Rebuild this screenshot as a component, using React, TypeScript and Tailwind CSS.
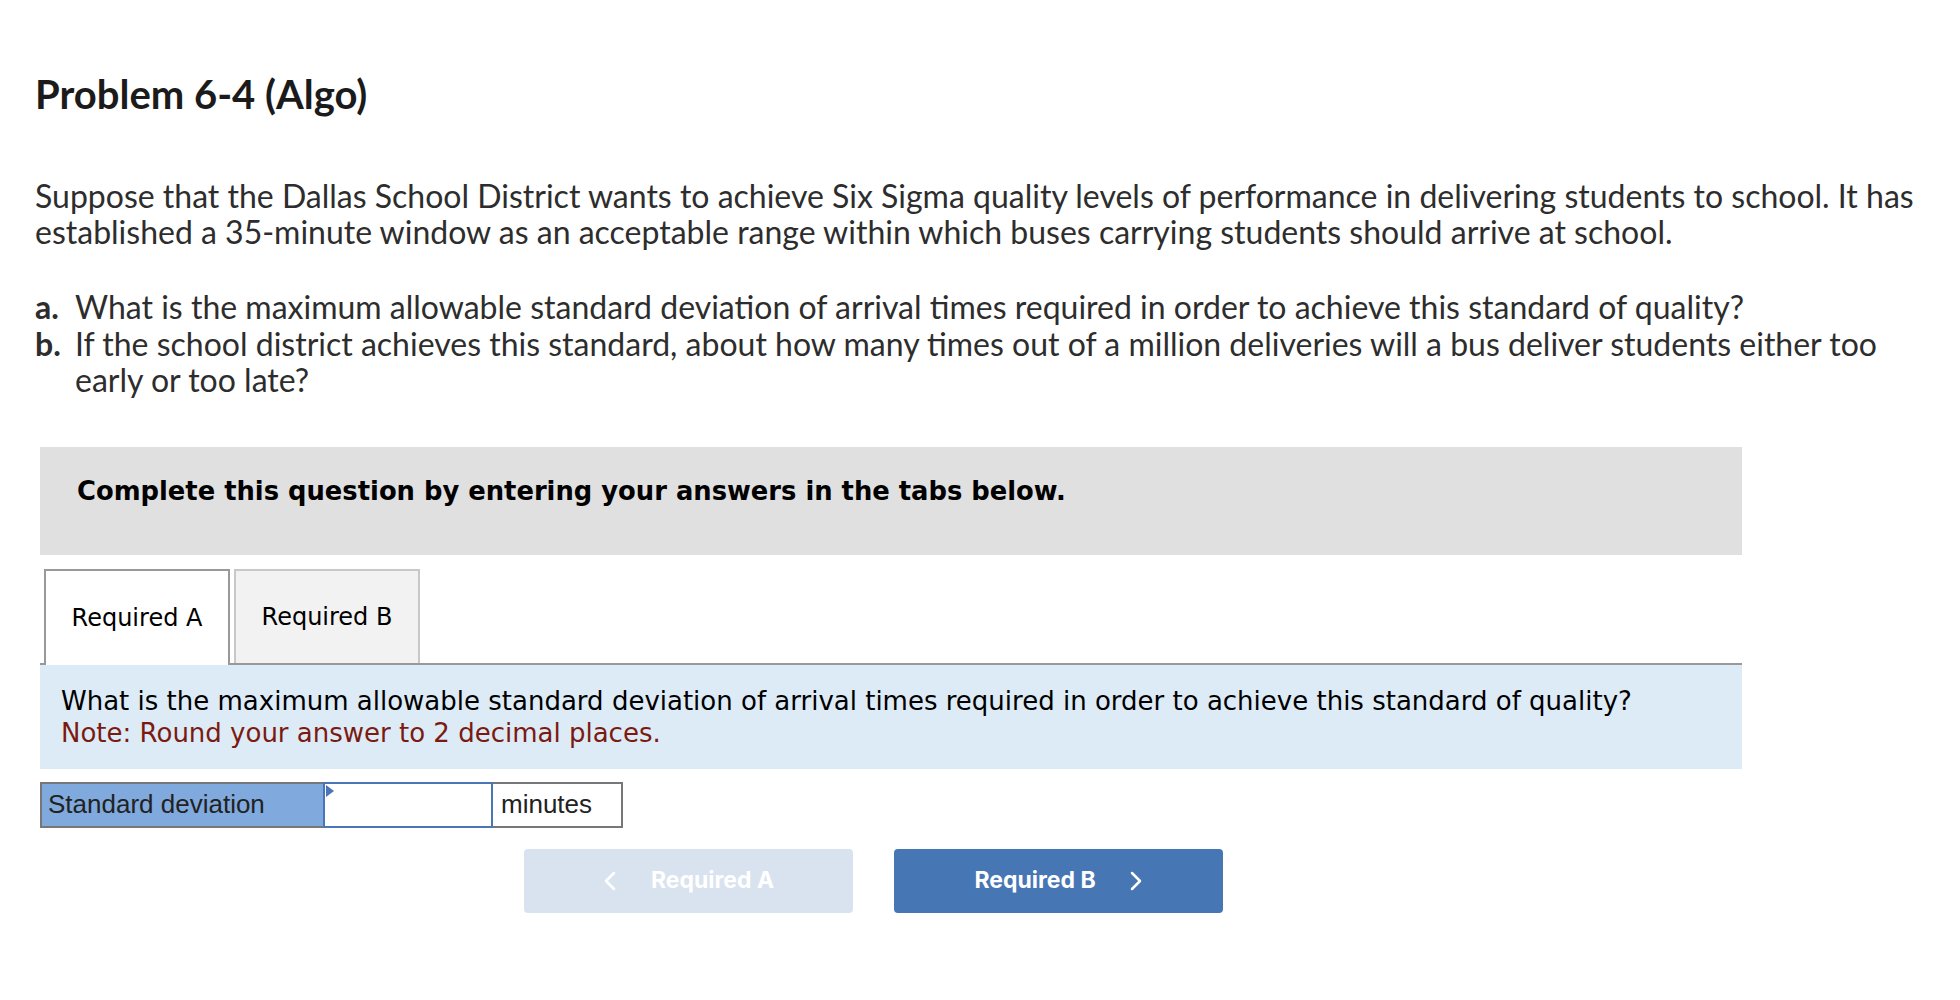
import React from 'react';

const verdana = { fontFamily: '"DejaVu Sans", Verdana, sans-serif' };

const Chevron = ({ dir }: { dir: 'left' | 'right' }) => (
  <svg width="14" height="20" viewBox="0 0 14 20" fill="none" className="shrink-0">
    <path
      d={dir === 'left' ? 'M11 2 L3 10 L11 18' : 'M3 2 L11 10 L3 18'}
      stroke="white"
      strokeWidth="2.5"
      strokeLinecap="round"
      strokeLinejoin="round"
    />
  </svg>
);

const Tab = ({ label, active }: { label: string; active?: boolean }) => {
  return (
    <div
      className={`w-[186px] flex items-center justify-center border-2 border-b-0 text-[24px] text-black ${
        active
          ? 'h-[96px] -mb-[2px] bg-white border-[#999999] relative z-10'
          : 'h-[94px] bg-[#f2f2f2] border-[#c8c8c8]'
      }`}
      style={verdana}
    >
      {label}
    </div>
  );
};

export default function App() {
  return (
    <div className="min-h-[1000px] bg-white pt-[74px] pl-[35px] pr-[35px] text-[#2d2d2d] font-['Lato',sans-serif]">
      <h1 className="text-[40px] leading-[40px] font-bold text-[#1b1b1b]">Problem 6-4 (Algo)</h1>

      {/* Problem statement */}
      <p className="mt-[64px] text-[32px] leading-[36px]">
        Suppose that the Dallas School District wants to achieve Six Sigma quality levels of performance in delivering
        students to school. It has established a 35-minute window as an acceptable range within which buses carrying
        students should arrive at school.
      </p>

      <div className="mt-[39px] text-[32px] leading-[36.5px]">
        <div className="flex">
          <span className="w-[40px] shrink-0 font-bold">a.</span>
          <span>What is the maximum allowable standard deviation of arrival times required in order to achieve this standard of quality?</span>
        </div>
        <div className="flex">
          <span className="w-[40px] shrink-0 font-bold">b.</span>
          <span>
            If the school district achieves this standard, about how many times out of a million deliveries will a bus deliver
            students either too early or too late?
          </span>
        </div>
      </div>

      {/* Question workspace */}
      <div className="ml-[5px] mt-[48px] w-[1702px]">
        <div className="h-[108px] bg-[#e0e0e0] pl-[37px] pt-[28px]">
          <p className="text-[25.8px] leading-[32px] font-bold text-black" style={verdana}>
            Complete this question by entering your answers in the tabs below.
          </p>
        </div>

        <div className="mt-[14px] flex items-end gap-[4px] pl-[4px] border-b-2 border-[#999999]">
          <Tab label="Required A" active />
          <Tab label="Required B" />
        </div>

        <div className="h-[104px] bg-[#ddebf7] pl-[21px] pt-[20px] text-[26px] leading-[32px]" style={verdana}>
          <p className="text-black">
            What is the maximum allowable standard deviation of arrival times required in order to achieve this standard of quality?
          </p>
          <p className="text-[#7b1a10]">Note: Round your answer to 2 decimal places.</p>
        </div>

        {/* Answer row */}
        <div className="mt-[13px] flex h-[46px] w-[583px] text-[26px] text-[#222222] font-['Liberation_Sans',Arial,sans-serif]">
          <div className="w-[283px] flex items-center border-2 border-r-0 border-[#777777] bg-[#80a9dd] pl-[6px]">
            Standard deviation
          </div>
          <div className="relative w-[170px] border-2 border-[#4a76b8] bg-white">
            <span className="absolute left-[1px] top-[1px] w-0 h-0 border-t-[6px] border-b-[6px] border-l-[8px] border-t-transparent border-b-transparent border-l-[#4a76b8]" />
          </div>
          <div className="w-[130px] flex items-center border-2 border-l-0 border-[#777777] bg-white pl-[8px]">minutes</div>
        </div>

        {/* Navigation */}
        <div className="mt-[21px] ml-[484px] flex gap-[41px] font-['Inter',sans-serif] text-[23px] font-bold text-white">
          <button className="w-[329px] h-[64px] rounded-[4px] bg-[#d9e3ef] flex items-center justify-center gap-[34px]">
            <Chevron dir="left" />
            <span>Required A</span>
          </button>
          <button className="w-[329px] h-[64px] rounded-[4px] bg-[#4676b3] flex items-center justify-center gap-[33px]">
            <span>Required B</span>
            <Chevron dir="right" />
          </button>
        </div>
      </div>
    </div>
  );
}
